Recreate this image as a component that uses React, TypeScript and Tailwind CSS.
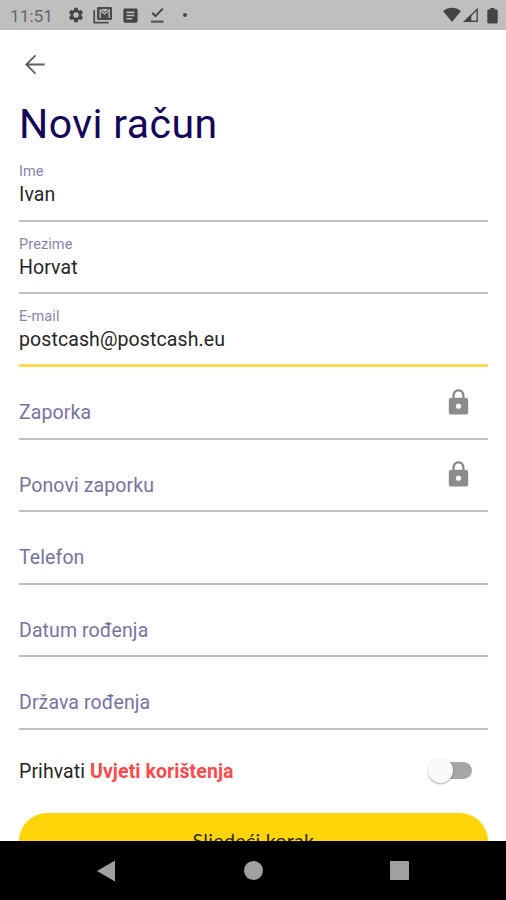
import type { ReactNode } from "react";

type FieldProps = {
  label: string;
  value?: string;
  focused?: boolean;
  icon?: ReactNode;
};

function LockIcon() {
  return (
    <svg viewBox="0 0 24 24" className="h-[29px] w-[29px] fill-[#8b8b8b]">
      <path d="M18 8h-1V6c0-2.76-2.24-5-5-5S7 3.24 7 6v2H6c-1.1 0-2 .9-2 2v10c0 1.1.9 2 2 2h12c1.1 0 2-.9 2-2V10c0-1.1-.9-2-2-2zm-6 9.2c-1.2 0-2.2-1-2.2-2.2s1-2.2 2.2-2.2 2.2 1 2.2 2.2-1 2.2-2.2 2.2zm3.1-9.2H8.9V6c0-1.71 1.39-3.1 3.1-3.1s3.1 1.39 3.1 3.1v2z" />
    </svg>
  );
}

function Field({ label, value, focused, icon }: FieldProps) {
  return (
    <div
      className={`flex h-[72.65px] shrink-0 justify-between ${
        focused ? "border-b-[3px] border-[#ffd954]" : "border-b-2 border-[#c0c0c0]"
      }`}
    >
      {value ? (
        <div className="flex flex-col pt-[15px]">
          <span className="text-[14.5px] leading-[16px] tracking-[0.1px] text-[#8784ab]">{label}</span>
          <span className="mt-[3px] text-[19.5px] leading-[24px] tracking-[0.1px] text-[#262626]">{value}</span>
        </div>
      ) : (
        <span className="pt-[34px] text-[19.5px] leading-[24px] tracking-[0.1px] text-[#77739f]">{label}</span>
      )}
      {icon && <div className="mr-[15px] pt-[20.7px]">{icon}</div>}
    </div>
  );
}

function StatusBar() {
  return (
    <header className="flex h-[30px] shrink-0 items-center justify-between bg-[#bfbfbf] pr-[8px] pl-[10px] text-[#444]">
      <div className="flex items-center">
        <span className="w-[57px] pt-px text-[17.3px] leading-[30px] text-[#666]">11:51</span>
        <svg viewBox="0 0 24 24" className="h-[18px] w-[18px] fill-current">
          <path d="M19.14 12.94c.04-.3.06-.61.06-.94 0-.32-.02-.64-.07-.94l2.03-1.58a.49.49 0 0 0 .12-.61l-1.92-3.32a.488.488 0 0 0-.59-.22l-2.39.96c-.5-.38-1.03-.7-1.62-.94l-.36-2.54a.484.484 0 0 0-.48-.41h-3.84c-.24 0-.43.17-.47.41l-.36 2.54c-.59.24-1.13.57-1.62.94l-2.39-.96c-.22-.08-.47 0-.59.22L2.74 8.87c-.12.21-.08.47.12.61l2.03 1.58c-.05.3-.09.63-.09.94s.02.64.07.94l-2.03 1.58a.49.49 0 0 0-.12.61l1.92 3.32c.12.22.37.29.59.22l2.39-.96c.5.38 1.03.7 1.62.94l.36 2.54c.05.24.24.41.48.41h3.84c.24 0 .44-.17.47-.41l.36-2.54c.59-.24 1.13-.56 1.62-.94l2.39.96c.22.08.47 0 .59-.22l1.92-3.32c.12-.22.07-.47-.12-.61l-2.01-1.58zM12 15.6A3.6 3.6 0 1 1 12 8.4a3.6 3.6 0 0 1 0 7.2z" />
        </svg>
        <svg viewBox="0 0 20 18" className="ml-[8px] h-[18px] w-[20px]">
          <path d="M1.2 4v12.7h14.5" fill="none" stroke="#4c4c4c" strokeWidth="1.7" />
          <rect x="4" y="1" width="15" height="13" rx="1.2" fill="#4a4a4a" />
          <path d="M7.2 12V4.3l4.5 3.7 4.5-3.7V12" fill="none" stroke="#bfbfbf" strokeWidth="1.3" />
          <path d="M7.8 2.9h7.6L11.6 6z" fill="#bfbfbf" />
        </svg>
        <svg viewBox="0 0 24 24" className="ml-[8px] h-[19px] w-[19px] fill-current">
          <path d="M19 3H5c-1.1 0-2 .9-2 2v14c0 1.1.9 2 2 2h14c1.1 0 2-.9 2-2V5c0-1.1-.9-2-2-2zm-5 14H7v-2h7v2zm3-4H7v-2h10v2zm0-4H7V7h10v2z" />
        </svg>
        <svg viewBox="0 0 18 18" className="ml-[8px] h-[18px] w-[18px]">
          <path d="m4.2 6.7 3.3 3.4L14.8 2.6" fill="none" stroke="#444" strokeWidth="2" />
          <path d="M3 15.6h12.5" stroke="#555" strokeWidth="2.2" />
        </svg>
        <span className="ml-[16.5px] h-[4px] w-[4px] rounded-full bg-[#444]" />
      </div>
      <div className="flex items-center">
        <svg viewBox="0 0 18 16" className="h-[16px] w-[18px] fill-current">
          <path d="M0 4.1C5-.4 13-.4 18 4.1L9 15z" />
        </svg>
        <svg viewBox="0 0 16 16" className="ml-[2px] h-[16px] w-[16px]">
          <path d="M14.2 2.2v12H2.3z" fill="none" stroke="#4b4b4b" strokeWidth="1.4" />
          <path d="M0 15 8.3 7v8z" fill="#444" />
        </svg>
        <svg viewBox="0 0 11 17" className="ml-[8px] h-[17px] w-[11px] fill-current">
          <path d="M3.2 1h4.4v1.6h1.9c.7 0 1.2.5 1.2 1.2v11.4c0 .7-.5 1.2-1.2 1.2h-8c-.7 0-1.2-.5-1.2-1.2V3.8c0-.7.5-1.2 1.2-1.2h1.7z" />
        </svg>
      </div>
    </header>
  );
}

export default function App() {
  return (
    <div className="flex h-[900px] w-[506px] flex-col overflow-hidden bg-white font-['Roboto',sans-serif]">
      <StatusBar />
      <main className="flex min-h-0 flex-1 flex-col overflow-hidden pr-[18px] pl-[19px]">
        <button className="mt-[20px] h-[29px] w-[29px] shrink-0" aria-label="Natrag">
          <svg viewBox="0 0 29 29" className="h-[29px] w-[29px]" fill="none" stroke="#616161" strokeWidth="1.9">
            <path d="M25.7 14.5H7.8M16.5 5.3l-9.2 9.2 9.2 9.2" />
          </svg>
        </button>
        <h1 className="mt-[20px] h-[50px] shrink-0 text-[41px] leading-[50px] tracking-[0.4px] text-[#140659]">Novi račun</h1>
        <form className="flex shrink-0 flex-col">
          <Field label="Ime" value="Ivan" />
          <Field label="Prezime" value="Horvat" />
          <Field label="E-mail" value="postcash@postcash.eu" focused />
          <Field label="Zaporka" icon={<LockIcon />} />
          <Field label="Ponovi zaporku" icon={<LockIcon />} />
          <Field label="Telefon" />
          <Field label="Datum rođenja" />
          <Field label="Država rođenja" />
        </form>
        <div className="mt-[24px] flex h-[34px] shrink-0 items-center justify-between pr-[16px]">
          <p className="pt-[2px] text-[19.5px] leading-[24px] tracking-[0.08px] text-[#262626]">
            Prihvati <span className="font-bold text-[#ff4a4a]">Uvjeti korištenja</span>
          </p>
          <div className="mb-px flex h-[17px] w-[41px] items-center rounded-full bg-[#a6a6a6]">
            <span className="-ml-[3px] h-[25px] w-[25px] shrink-0 rounded-full bg-[#fafafa] shadow-[0_1px_2px_rgba(0,0,0,0.35)]" />
          </div>
        </div>
        <button className="mt-[25px] h-[57px] shrink-0 rounded-[28px] bg-[#ffd50a] pb-[2px] font-['Lato',sans-serif] text-[19.7px] tracking-[0.25px] text-[#332908]">
          Sljedeći korak
        </button>
      </main>
      <nav className="flex h-[59px] shrink-0 items-center bg-black pl-[96.5px]">
        <svg viewBox="0 0 18 22" className="h-[22px] w-[18px] fill-[#a0a0a0]">
          <path d="M18 .5v21L0 11z" />
        </svg>
        <span className="ml-[129px] h-[19px] w-[19px] rounded-full bg-[#a0a0a0]" />
        <span className="ml-[127px] h-[19px] w-[19px] rounded-[1px] bg-[#a0a0a0]" />
      </nav>
    </div>
  );
}
